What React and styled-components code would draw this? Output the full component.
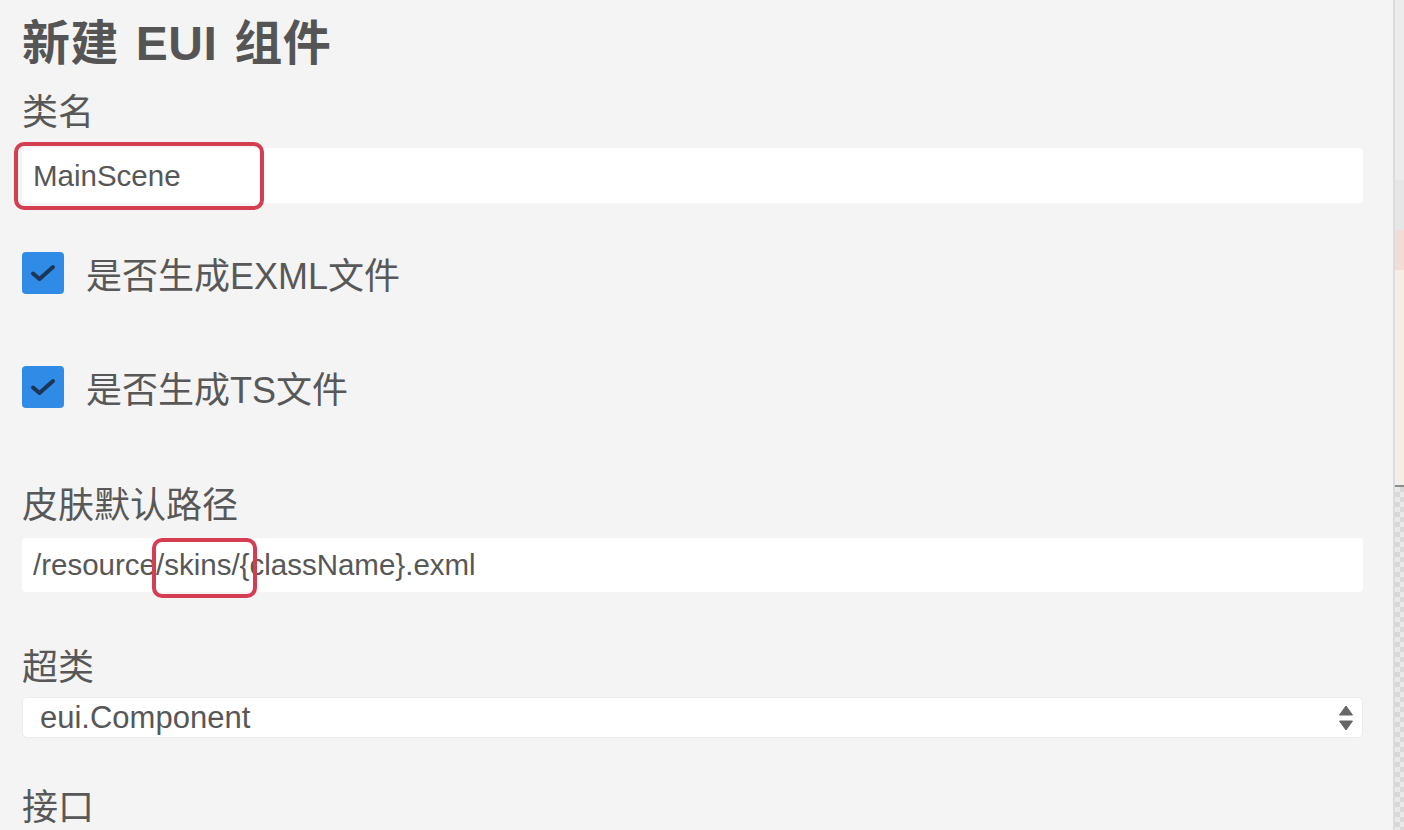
import React from "react";
import styled, { createGlobalStyle } from "styled-components";

const GlobalStyle = createGlobalStyle`
  html, body {
    margin: 0;
    padding: 0;
    background: #f4f4f4;
  }
  body {
    font-family: "Liberation Sans", "Noto Sans CJK SC", sans-serif;
    color: #555;
  }
`;

const Page = styled.div`
  display: flex;
  width: 1404px;
  height: 830px;
  overflow: hidden;
`;

const Panel = styled.div`
  flex: 1;
  display: flex;
  flex-direction: column;
  padding: 16px 30px 0 22px;
  background: #f4f4f4;
  border-right: 2px solid #dcdcdc;
`;

const Title = styled.h1`
  margin: 0;
  font-size: 48px;
  line-height: 56px;
  font-weight: bold;
  color: #555;
  word-spacing: 3px;
  letter-spacing: 0.5px;
`;

const Label = styled.div`
  margin-top: ${(p) => p.top}px;
  font-size: 36px;
  line-height: 44px;
  color: #585858;
`;

const Field = styled.div`
  position: relative;
  display: flex;
  align-items: center;
  margin-top: ${(p) => p.top}px;
  height: ${(p) => p.h}px;
  padding-left: 11px;
  background: #fff;
  border-radius: 4px;
  font-size: 29.5px;
  color: #575757;
`;

const Highlight = styled.div`
  position: absolute;
  left: ${(p) => p.x}px;
  top: ${(p) => p.y}px;
  width: ${(p) => p.w}px;
  height: ${(p) => p.h}px;
  box-sizing: border-box;
  border: 4px solid #d43d52;
  border-radius: 10px;
  pointer-events: none;
`;

const CheckRow = styled.label`
  display: flex;
  align-items: center;
  gap: 22px;
  margin-top: ${(p) => p.top}px;
  height: 42px;
  font-size: 36px;
  color: #585858;
`;

const Box = styled.span`
  display: flex;
  align-items: center;
  justify-content: center;
  width: 42px;
  height: 42px;
  background: #2f8be6;
  border-radius: 4px;
`;

const Select = styled.div`
  display: flex;
  align-items: center;
  justify-content: space-between;
  margin-top: ${(p) => p.top}px;
  height: 41px;
  padding: 0 8px 0 17px;
  background: #fff;
  border: 1px solid #ececec;
  border-radius: 5px;
  box-sizing: border-box;
  font-size: 31px;
  color: #575757;
`;

const Strip = styled.div`
  width: 9px;
  display: flex;
  flex-direction: column;
`;

const Seg = styled.div`
  height: ${(p) => p.h}px;
  background: ${(p) => p.bg};
  border-bottom: ${(p) => (p.line ? "2px solid #8c8c8c" : "none")};
`;

const Checker = styled.div`
  flex: 1;
  background-color: #e9e9e9;
  background-image: linear-gradient(45deg, #d8d8d8 25%, transparent 25%, transparent 75%, #d8d8d8 75%),
    linear-gradient(45deg, #d8d8d8 25%, transparent 25%, transparent 75%, #d8d8d8 75%);
  background-size: 10px 10px;
  background-position: 0 0, 5px 5px;
`;

const Check = () => (
  <svg width="26" height="18" viewBox="0 0 26 18">
    <path d="M3 9.5 L9.5 15 L23 3" fill="none" stroke="#1c3556" strokeWidth="4" strokeLinecap="round" strokeLinejoin="round" />
  </svg>
);

const Arrows = () => (
  <svg width="16" height="30" viewBox="0 0 16 30">
    <path d="M8 3 L14.5 12 L1.5 12 Z" fill="#666" strokeLinejoin="round" stroke="#666" strokeWidth="1" />
    <path d="M1.5 18 L14.5 18 L8 27 Z" fill="#666" strokeLinejoin="round" stroke="#666" strokeWidth="1" />
  </svg>
);

export default function App() {
  return (
    <Page>
      <GlobalStyle />
      <Panel>
        <Title>新建 EUI 组件</Title>
        <Label top={19}>类名</Label>
        <Field top={13} h={55}>
          MainScene
          <Highlight x={-8} y={-6} w={250} h={68} />
        </Field>
        <CheckRow top={49}>
          <Box><Check /></Box>
          是否生成EXML文件
        </CheckRow>
        <CheckRow top={72}>
          <Box><Check /></Box>
          是否生成TS文件
        </CheckRow>
        <Label top={76}>皮肤默认路径</Label>
        <Field top={10} h={54}>
          /resource/skins/{"{className}"}.exml
          <Highlight x={130} y={0} w={105} h={60} />
        </Field>
        <Label top={54}>超类</Label>
        <Select top={7}>
          eui.Component
          <Arrows />
        </Select>
        <Label top={48}>接口</Label>
      </Panel>
      <Strip>
        <Seg h={180} bg="#ececec" />
        <Seg h={50} bg="#e6e6e6" />
        <Seg h={40} bg="#f2dcd6" />
        <Seg h={215} bg="#f3eee6" line />
        <Checker />
      </Strip>
    </Page>
  );
}
